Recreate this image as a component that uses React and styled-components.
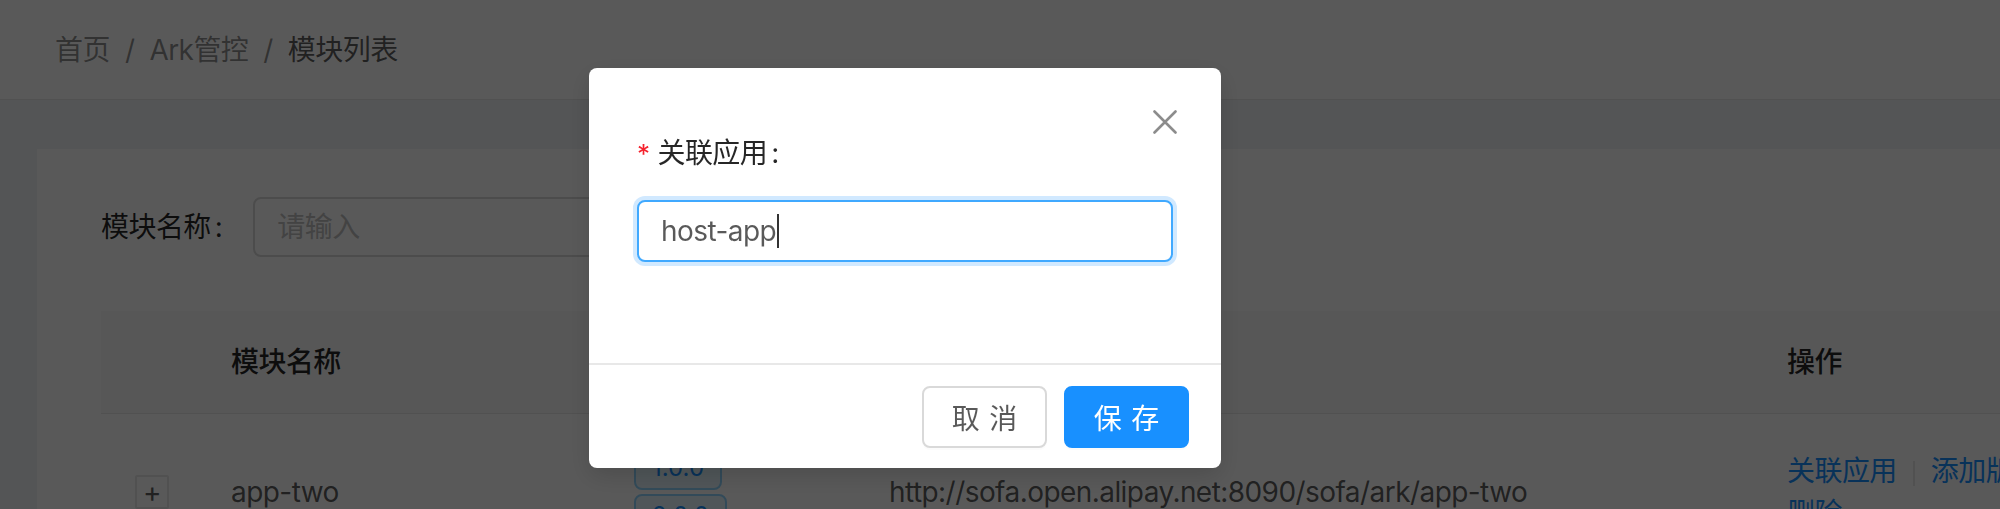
import React from 'react';
import styled, { createGlobalStyle } from 'styled-components';

const GlobalStyle = createGlobalStyle`
  html, body { margin: 0; padding: 0; }
  * { box-sizing: border-box; }
  body {
    width: 2000px;
    height: 509px;
    overflow: hidden;
    background: #f0f2f5;
    font-family: Inter, "Noto Sans CJK SC", sans-serif;
    font-size: 28px;
    line-height: 1.5;
    letter-spacing: -0.02em;
    color: rgba(0, 0, 0, 0.65);
  }
`;

const COLS = '98px 403px 255px 898px 364px';

const Page = styled.div`
  width: 2240px;
  min-height: 509px;
  background: #f0f2f5;
`;

const Header = styled.header`
  height: 100px;
  background: #fff;
  border-bottom: 1px solid #e8e8e8;
  display: flex;
  align-items: center;
  padding-left: 55px;
`;

const Crumb = styled.span`
  color: ${(p) => (p.$current ? 'rgba(0,0,0,0.65)' : 'rgba(0,0,0,0.45)')};
`;

const Sep = styled.span`
  margin: 0 15px;
  color: rgba(0, 0, 0, 0.45);
`;

const Content = styled.main`
  padding: 49px 0 0 37px;
`;

const Card = styled.section`
  width: 2146px;
  min-height: 420px;
  background: #fff;
  padding: 48px 64px 0;
`;

const FilterRow = styled.div`
  display: flex;
  align-items: center;
`;

const FieldLabel = styled.label`
  display: inline-flex;
  align-items: center;
  color: rgba(0, 0, 0, 0.85);
`;

const Colon = styled.span`
  margin: 0 ${(p) => p.$gap}px 0 4px;
`;

const InputBox = styled.div`
  display: flex;
  align-items: center;
  width: ${(p) => p.$width};
  height: ${(p) => p.$height}px;
  padding: 0 22px;
  border: 2px solid ${(p) => (p.$focused ? '#40a9ff' : '#d9d9d9')};
  border-radius: 8px;
  background: #fff;
  box-shadow: ${(p) => (p.$focused ? '0 0 0 4px rgba(24,144,255,0.2)' : 'none')};
  color: rgba(0, 0, 0, 0.65);
`;

const Placeholder = styled.span`
  color: #bfbfbf;
`;

const Caret = styled.span`
  display: inline-block;
  width: 2px;
  height: 34px;
  margin-left: 1px;
  background: #333;
`;

const Table = styled.div`
  margin-top: 54px;
`;

const HeadRow = styled.div`
  display: grid;
  grid-template-columns: ${COLS};
  align-items: center;
  height: 103px;
  background: #fafafa;
  border-bottom: 1px solid #e8e8e8;
  color: rgba(0, 0, 0, 0.85);
  font-weight: 500;
`;

const HeadCell = styled.div`
  padding: 0 32px;
`;

const BodyRow = styled.div`
  display: grid;
  grid-template-columns: ${COLS};
  align-items: center;
  border-bottom: 1px solid #e8e8e8;
`;

const Cell = styled.div`
  padding: 32px;
`;

const ExpandCell = styled.div`
  padding: 32px 0 32px 34px;
  display: flex;
  align-items: center;
`;

const ExpandIcon = styled.span`
  width: 34px;
  height: 34px;
  border: 2px solid #e8e8e8;
  border-radius: 2px;
  background: #fff;
  display: flex;
  align-items: center;
  justify-content: center;
  font-size: 28px;
  line-height: 1;
  color: rgba(0, 0, 0, 0.65);
`;

const TagList = styled.div`
  display: flex;
  flex-wrap: wrap;
  column-gap: 16px;
  row-gap: 4px;
`;

const Tag = styled.span`
  height: 44px;
  padding: 0 16px;
  border: 2px solid #91d5ff;
  border-radius: 8px;
  background: #e6f7ff;
  color: #1890ff;
  font-size: 24px;
  line-height: 40px;
  letter-spacing: 0;
`;

const Link = styled.a`
  color: #1890ff;
  text-decoration: none;
  cursor: pointer;
`;

const VDivider = styled.span`
  display: inline-block;
  width: 2px;
  height: 0.9em;
  margin: 0 16px;
  vertical-align: middle;
  background: #e8e8e8;
`;

const Mask = styled.div`
  position: fixed;
  inset: 0;
  background: rgba(0, 0, 0, 0.65);
  z-index: 10;
`;

const Dialog = styled.div`
  position: fixed;
  top: 68px;
  left: 589px;
  width: 632px;
  background: #fff;
  border-radius: 8px;
  box-shadow: 0 8px 24px rgba(0, 0, 0, 0.15);
  z-index: 11;
`;

const CloseButton = styled.button`
  position: absolute;
  top: 0;
  right: 0;
  width: 112px;
  height: 108px;
  padding: 0;
  border: 0;
  background: transparent;
  display: flex;
  align-items: center;
  justify-content: center;
  color: rgba(0, 0, 0, 0.45);
  cursor: pointer;
`;

const ModalBody = styled.div`
  padding: 65px 48px 101px;
`;

const ModalLabel = styled.div`
  display: flex;
  align-items: center;
  height: 40px;
  margin-bottom: 27px;
  color: rgba(0, 0, 0, 0.85);
`;

const Required = styled.span`
  margin-right: 8px;
  color: #f5222d;
  font-size: 26px;
`;

const ModalFooter = styled.div`
  display: flex;
  justify-content: flex-end;
  gap: 17px;
  padding: 21px 32px 20px;
  border-top: 2px solid #e8e8e8;
`;

const Button = styled.button`
  width: 125px;
  height: 62px;
  padding: 0;
  border: 2px solid ${(p) => (p.$primary ? '#1890ff' : '#d9d9d9')};
  border-radius: 8px;
  background: ${(p) => (p.$primary ? '#1890ff' : '#fff')};
  color: ${(p) => (p.$primary ? '#fff' : 'rgba(0,0,0,0.65)')};
  font-family: inherit;
  font-size: 28px;
  cursor: pointer;
  box-shadow: 0 2px 0 rgba(0, 0, 0, 0.015);
`;

const TwoChars = styled.span`
  letter-spacing: 0.34em;
  margin-right: -0.34em;
`;

const CloseIcon = () => (
  <svg width="24" height="24" viewBox="0 0 24 24" fill="none">
    <path d="M1.5 1.5 L22.5 22.5 M22.5 1.5 L1.5 22.5" stroke="currentColor" strokeWidth="2.6" strokeLinecap="round" />
  </svg>
);

export default function App() {
  return (
    <>
      <GlobalStyle />
      <Page>
        <Header>
          <Crumb>首页</Crumb>
          <Sep>/</Sep>
          <Crumb>Ark管控</Crumb>
          <Sep>/</Sep>
          <Crumb $current>模块列表</Crumb>
        </Header>
        <Content>
          <Card>
            <FilterRow>
              <FieldLabel>
                模块名称<Colon $gap={31}>:</Colon>
              </FieldLabel>
              <InputBox $width="560px" $height={60}>
                <Placeholder>请输入</Placeholder>
              </InputBox>
            </FilterRow>
            <Table>
              <HeadRow>
                <HeadCell />
                <HeadCell>模块名称</HeadCell>
                <HeadCell>版本</HeadCell>
                <HeadCell>仓库地址</HeadCell>
                <HeadCell>操作</HeadCell>
              </HeadRow>
              <BodyRow>
                <ExpandCell>
                  <ExpandIcon>+</ExpandIcon>
                </ExpandCell>
                <Cell>app-two</Cell>
                <Cell>
                  <TagList>
                    <Tag>1.0.0</Tag>
                    <Tag>2.0.0</Tag>
                  </TagList>
                </Cell>
                <Cell>http://sofa.open.alipay.net:8090/sofa/ark/app-two</Cell>
                <Cell>
                  <Link>关联应用</Link>
                  <VDivider />
                  <Link>添加版本</Link>
                  <VDivider />
                  <Link>删除</Link>
                </Cell>
              </BodyRow>
            </Table>
          </Card>
        </Content>
      </Page>
      <Mask />
      <Dialog role="dialog">
        <CloseButton aria-label="关闭">
          <CloseIcon />
        </CloseButton>
        <ModalBody>
          <ModalLabel>
            <Required>*</Required>
            关联应用<Colon $gap={0}>:</Colon>
          </ModalLabel>
          <InputBox $width="100%" $height={62} $focused>
            host-app
            <Caret />
          </InputBox>
        </ModalBody>
        <ModalFooter>
          <Button>
            <TwoChars>取消</TwoChars>
          </Button>
          <Button $primary>
            <TwoChars>保存</TwoChars>
          </Button>
        </ModalFooter>
      </Dialog>
    </>
  );
}
